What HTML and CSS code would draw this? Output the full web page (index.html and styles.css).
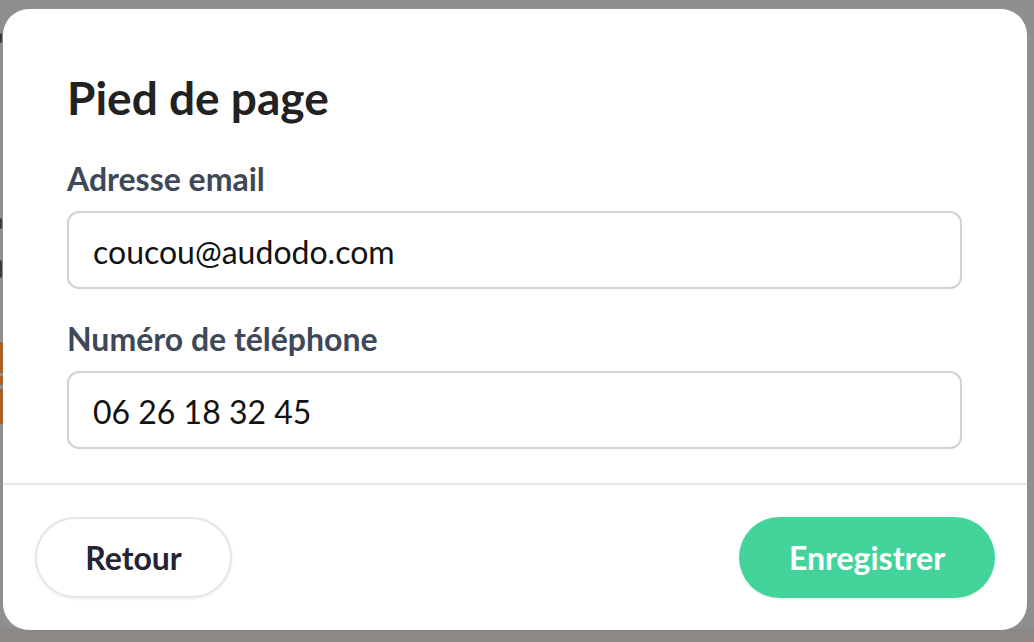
FILE: index.html
```html
<!DOCTYPE html>
<html lang="fr">
<head>
<meta charset="utf-8">
<title>Pied de page</title>
<link rel="stylesheet" href="styles.css">
</head>
<body>
  <div class="backdrop">
    <span class="bg-frag bg-frag-1"></span>
    <span class="bg-frag bg-frag-2"></span>
    <span class="bg-frag bg-frag-3"></span>
    <span class="bg-orange bg-orange-1"></span>
    <span class="bg-orange bg-orange-2"></span>
    <span class="bg-orange bg-orange-3"></span>
    <div class="bg-bottom"></div>
  </div>

  <div class="modal" role="dialog" aria-labelledby="modal-title">
    <div class="modal-body">
      <h1 id="modal-title" class="modal-title">Pied de page</h1>
      <div class="field field-first">
        <label class="field-label" for="email">Adresse email</label>
        <input class="field-input" id="email" type="text" value="coucou@audodo.com">
      </div>
      <div class="field">
        <label class="field-label" for="phone">Numéro de téléphone</label>
        <input class="field-input" id="phone" type="text" value="06 26 18 32 45">
      </div>
    </div>
    <div class="modal-footer">
      <button class="btn btn-secondary" type="button">Retour</button>
      <button class="btn btn-primary" type="button">Enregistrer</button>
    </div>
  </div>
</body>
</html>
```

FILE: styles.css
```css
* {
  box-sizing: border-box;
}

html, body {
  margin: 0;
  padding: 0;
}

body {
  width: 1034px;
  height: 642px;
  overflow: hidden;
  background: #8f8f8f;
  position: relative;
  font-family: Lato, "Noto Sans", "Liberation Sans", sans-serif;
  padding-top: 9px;
  padding-left: 3px;
}

.backdrop {
  position: absolute;
  inset: 0;
  z-index: 0;
}

.bg-frag {
  position: absolute;
  left: 0;
  width: 2px;
  background: #3a3a3a;
  border-radius: 0 2px 2px 0;
}

.bg-frag-1 { top: 33px; height: 10px; }
.bg-frag-2 { top: 218px; height: 11px; }
.bg-frag-3 { top: 260px; height: 18px; }

.bg-orange {
  position: absolute;
  left: 0;
  width: 3px;
  background: #a4622a;
}

.bg-orange-1 { top: 342px; height: 31px; }
.bg-orange-2 { top: 376px; height: 9px; }
.bg-orange-3 { top: 389px; height: 35px; }

.bg-bottom {
  position: absolute;
  left: 0;
  right: 0;
  bottom: 0;
  height: 13px;
  background: #8c8883;
}

.modal {
  position: relative;
  z-index: 1;
  width: 1024px;
  height: 621px;
  background: #ffffff;
  border-radius: 26px;
  display: flex;
  flex-direction: column;
  overflow: hidden;
}

.modal-body {
  padding: 61px 65px 0 64px;
  display: flex;
  flex-direction: column;
  height: 476px;
  flex-shrink: 0;
  border-bottom: 2px solid #e7e7ea;
}

.modal-title {
  margin: 0;
  font-size: 46px;
  line-height: 55px;
  font-weight: 700;
  color: #222222;
  letter-spacing: 0;
}

.field {
  display: flex;
  flex-direction: column;
  gap: 13px;
  margin-top: 31px;
}

.field-first {
  margin-top: 35px;
}

.field-label {
  font-size: 32px;
  line-height: 38px;
  font-weight: 700;
  color: #3e4858;
}

.field-input {
  display: block;
  width: 100%;
  height: 78px;
  border: 2px solid #cfd2d7;
  border-radius: 12px;
  padding: 2px 24px 0;
  font-family: Lato, "Noto Sans", "Liberation Sans", sans-serif;
  font-size: 32px;
  color: #121212;
  background: #ffffff;
  outline: none;
}

.modal-footer {
  flex: 1;
  display: flex;
  justify-content: space-between;
  align-items: center;
  padding: 0 32px;
}

.btn {
  height: 81px;
  border-radius: 41px;
  font-family: Lato, "Noto Sans", "Liberation Sans", sans-serif;
  font-size: 32px;
  font-weight: 700;
  cursor: pointer;
}

.btn-secondary {
  width: 197px;
  background: #ffffff;
  border: 2px solid #e6e6e6;
  color: #262433;
  box-shadow: 0 1px 3px rgba(0, 0, 0, 0.08);
}

.btn-primary {
  width: 256px;
  background: #43d49b;
  border: none;
  color: #ffffff;
  box-shadow: 0 1px 3px rgba(0, 0, 0, 0.08);
}
```
